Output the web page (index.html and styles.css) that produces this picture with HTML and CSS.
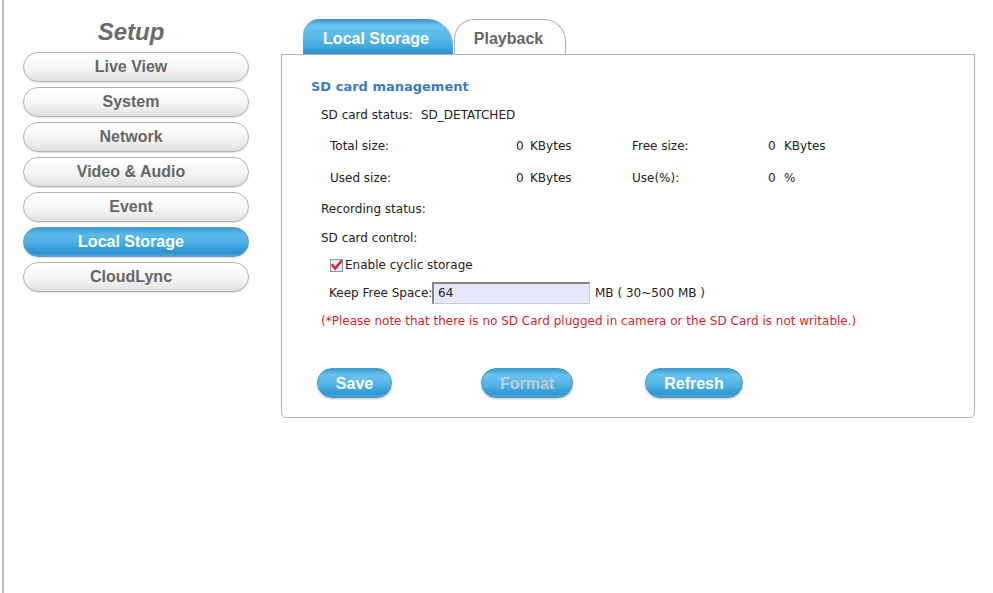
FILE: index.html
```html
<!DOCTYPE html>
<html>
<head>
<meta charset="utf-8">
<link rel="stylesheet" href="styles.css">
</head>
<body>
<div class="page">
  <aside class="sidebar">
    <div class="setup-title">Setup</div>
    <div class="nav-btn">Live View</div>
    <div class="nav-btn">System</div>
    <div class="nav-btn">Network</div>
    <div class="nav-btn">Video &amp; Audio</div>
    <div class="nav-btn">Event</div>
    <div class="nav-btn active">Local Storage</div>
    <div class="nav-btn">CloudLync</div>
  </aside>
  <main class="main">
    <div class="tabs">
      <div class="tab tab-active">Local Storage</div>
      <div class="tab tab-plain">Playback</div>
    </div>
    <section class="panel">
      <div class="row row-head"><span class="heading">SD card management</span></div>
      <div class="row row-status"><span class="status-label">SD card status:</span><span class="status-val">SD_DETATCHED</span></div>
      <div class="row row-stat stats">
        <span class="s-label">Total size:</span><span class="s-val">0</span><span class="s-unit">KBytes</span>
        <span class="s-label2">Free size:</span><span class="s-val2">0</span><span class="s-unit2">KBytes</span>
      </div>
      <div class="row row-stat2 stats">
        <span class="s-label">Used size:</span><span class="s-val">0</span><span class="s-unit">KBytes</span>
        <span class="s-label2">Use(%):</span><span class="s-val2">0</span><span class="s-unit2">%</span>
      </div>
      <div class="row row-rec">Recording status:</div>
      <div class="row row-ctrl">SD card control:</div>
      <div class="row row-check indent">
        <svg class="checkbox" width="13" height="13" viewBox="0 0 13 13">
          <rect x="0.5" y="0.5" width="12" height="12" fill="#dce6f4" stroke="#7f9db9"/>
          <rect x="1.5" y="1.5" width="10" height="10" fill="#e9eef7"/>
          <path d="M2.5 6.2 L5.2 9.6 L11.2 2.2" fill="none" stroke="#e8202a" stroke-width="2.4" stroke-linecap="square"/>
        </svg>
        <span>Enable cyclic storage</span>
      </div>
      <div class="row row-keep">
        <span class="keep-label">Keep Free Space:</span>
        <span class="input">64</span>
        <span class="mb">MB ( 30~500 MB )</span>
      </div>
      <div class="row row-note">(*Please note that there is no SD Card plugged in camera or the SD Card is not writable.)</div>
      <div class="actions">
        <div class="act-btn btn-save">Save</div>
        <div class="act-btn btn-format disabled">Format</div>
        <div class="act-btn btn-refresh">Refresh</div>
      </div>
    </section>
  </main>
</div>
</body>
</html>
```

FILE: styles.css
```css
html, body {
  margin: 0;
  padding: 0;
  background: #ffffff;
}
body {
  font-family: "DejaVu Sans", Tahoma, sans-serif;
  font-size: 12px;
  color: #222;
}
.page {
  display: flex;
  margin-left: 2px;
  border-left: 2px solid #bdbdbd;
  height: 593px;
  box-sizing: border-box;
}
.sidebar {
  width: 258px;
  padding: 17px 0 0 19px;
  box-sizing: content-box;
  flex: none;
  display: flex;
  flex-direction: column;
  gap: 5px;
}
.setup-title {
  font-family: "Liberation Sans", Arial, sans-serif;
  font-weight: bold;
  font-style: italic;
  font-size: 24px;
  color: #6b6b6b;
  text-align: center;
  width: 216px;
  height: 30px;
  line-height: 30px;
}
.nav-btn {
  width: 226px;
  height: 30px;
  box-sizing: border-box;
  border: 1px solid #b3b3b3;
  border-radius: 15px;
  padding-right: 10px;
  background: linear-gradient(#ffffff 0%, #f8f8f8 45%, #e8e8e8 85%, #dedede 100%);
  box-shadow: 0 1px 1px rgba(0,0,0,0.12);
  font-family: "Liberation Sans", Arial, sans-serif;
  font-weight: bold;
  font-size: 16px;
  color: #666666;
  text-align: center;
  line-height: 28px;
}
.nav-btn.active {
  border-color: #5a9ec8;
  background: linear-gradient(#3d9fd6 0%, #5ab8e8 25%, #46aee3 55%, #2a92cf 88%, #4aa6da 100%);
  color: #ffffff;
}
.main {
  width: 694px;
  flex: none;
  padding-top: 19px;
}
.tabs {
  display: flex;
  padding-left: 22px;
  height: 35px;
  align-items: flex-end;
}
.tab {
  height: 35px;
  box-sizing: border-box;
  font-family: "Liberation Sans", Arial, sans-serif;
  font-weight: bold;
  font-size: 16px;
  text-align: center;
  line-height: 39px;
}
.tab-active {
  width: 150px;
  padding-right: 4px;
  border-radius: 16px 26px 0 0 / 16px 26px 0 0;
  background: linear-gradient(#2f94d0 0%, #6cc4ee 18%, #55b8e9 55%, #3aa4de 85%, #2a8fcc 100%);
  color: #ffffff;
}
.tab-plain {
  width: 112px;
  margin-left: 1px;
  border: 1px solid #b0b0b0;
  border-bottom: none;
  border-radius: 20px 22px 0 0 / 20px 22px 0 0;
  background: #ffffff;
  color: #666666;
  line-height: 38px;
  padding-right: 3px;
}
.panel {
  border: 1px solid #b5b5b5;
  border-radius: 0 0 5px 5px;
  height: 364px;
  box-sizing: border-box;
  padding: 17px 0 0 29px;
}
.row {
  display: flex;
  align-items: center;
  white-space: nowrap;
}
.row-head { height: 28px; }
.heading {
  font-weight: bold;
  font-size: 13px;
  color: #3b7cc0;
}
.row-status { height: 30px; padding-left: 10px; }
.status-label { width: 100px; }
.stats {
  display: grid;
  grid-template-columns: 186px 8px 108px 136px 8px auto;
  align-items: center;
  padding-left: 19px;
}
.row-stat { height: 32px; }
.row-stat2 { height: 32px; }
.s-unit { padding-left: 6px; }
.s-unit2 { padding-left: 8px; }
.row-rec { height: 30px; padding-left: 10px; }
.row-ctrl { height: 27px; padding-left: 10px; }
.indent { padding-left: 19px; }
.row-check { height: 28px; }
.checkbox { margin-right: 2px; flex: none; }
.row-keep { height: 28px; padding-left: 18px; }
.keep-label { width: 103px; }
.input {
  display: inline-block;
  width: 158px;
  height: 22px;
  box-sizing: border-box;
  border-top: 2px solid #858585;
  border-left: 2px solid #858585;
  border-right: 1px solid #c8c8c8;
  border-bottom: 1px solid #c8c8c8;
  background: #e6e6fc;
  padding-left: 4px;
  line-height: 19px;
  color: #222;
}
.mb { margin-left: 5px; }
.row-note {
  height: 28px;
  padding-left: 10px;
  color: #e01c2c;
}
.actions {
  display: flex;
  margin-top: 33px;
  padding-left: 6px;
}
.act-btn {
  height: 30px;
  box-sizing: border-box;
  border: 1px solid #4f93bf;
  border-radius: 15px;
  background: linear-gradient(#3b9dd5 0%, #6ac2ee 22%, #52b5e7 55%, #2f98d4 88%, #4ba7da 100%);
  box-shadow: 0 1px 2px rgba(0,0,0,0.25);
  font-family: "Liberation Sans", Arial, sans-serif;
  font-weight: bold;
  font-size: 16px;
  color: #ffffff;
  text-align: center;
  line-height: 29px;
}
.btn-save { width: 75px; }
.btn-format { width: 92px; margin-left: 89px; }
.btn-refresh { width: 98px; margin-left: 72px; }
.act-btn.disabled { color: #c2ccd4; }
```
